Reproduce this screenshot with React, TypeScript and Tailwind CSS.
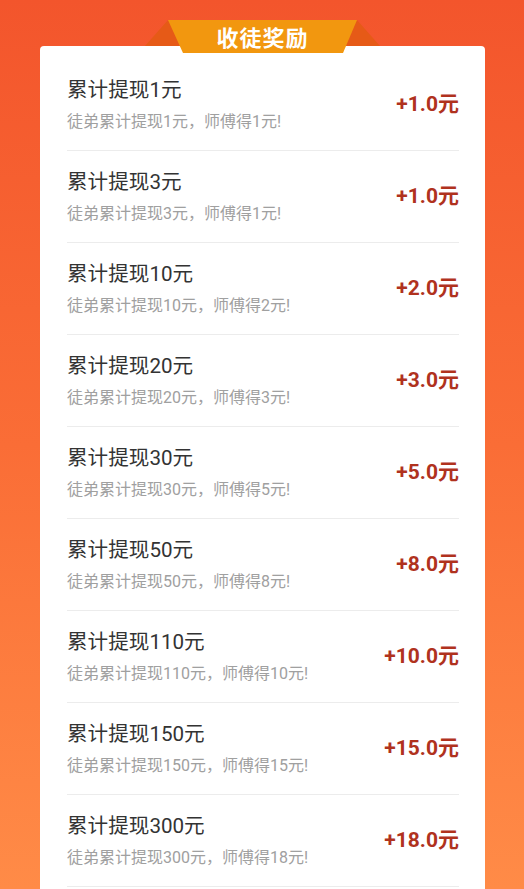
import React from 'react'

const rows = [
  { total: 1, get: 1, amount: '+1.0元' },
  { total: 3, get: 1, amount: '+1.0元' },
  { total: 10, get: 2, amount: '+2.0元' },
  { total: 20, get: 3, amount: '+3.0元' },
  { total: 30, get: 5, amount: '+5.0元' },
  { total: 50, get: 8, amount: '+8.0元' },
  { total: 110, get: 10, amount: '+10.0元' },
  { total: 150, get: 15, amount: '+15.0元' },
  { total: 300, get: 18, amount: '+18.0元' },
]

const font = { fontFamily: 'Roboto, "Noto Sans CJK SC", sans-serif' }

function Ribbon() {
  return (
    <div className="absolute left-[105px] top-[-26px] h-[33px] w-[235px]">
      <svg width="235" height="33" viewBox="0 0 235 33" className="absolute inset-0">
        <polygon points="0,26 23,0 50,26" fill="#e65a17" />
        <polygon points="235,26 212,0 185,26" fill="#e65a17" />
        <polygon points="23,0 212,0 198,33 38,33" fill="#f2970f" />
      </svg>
      <div
        className="relative flex h-[32px] items-center justify-center text-[22px] font-bold tracking-[1px] text-white"
        style={{ fontFamily: '"Noto Sans CJK SC", sans-serif' }}
      >
        收徒奖励
      </div>
    </div>
  )
}

export default function App() {
  return (
    <div
      className="h-[889px] overflow-hidden bg-gradient-to-b from-[#f3552c] via-[#fa6d36] to-[#ff8b47] pl-[40px] pr-[39px] pt-[46px]"
      style={font}
    >
      <div className="relative rounded-[4px] bg-white pl-[27px] pr-[26px] pt-[13px] pb-[40px]">
        <Ribbon />
        {rows.map((r) => (
          <div
            key={r.total}
            className="flex h-[92px] items-center justify-between border-b border-[#ececec]"
          >
            <div>
              <div className="text-[20.6px] leading-[28px] text-[#333333]">累计提现{r.total}元</div>
              <div className="mt-[7px] text-[16px] leading-[22px] text-[#a0a0a0]">
                徒弟累计提现{r.total}元，师傅得{r.get}元!
              </div>
            </div>
            <div className="text-[21px] font-bold text-[#b0321e]">{r.amount}</div>
          </div>
        ))}
      </div>
    </div>
  )
}
